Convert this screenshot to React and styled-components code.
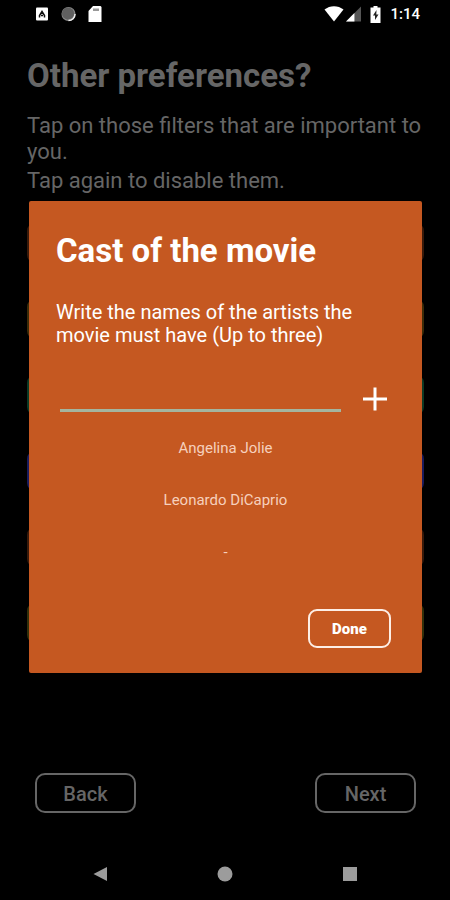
import { useState } from "react"
import styled, { createGlobalStyle } from "styled-components"

const GlobalStyle = createGlobalStyle`
  body {
    margin: 0;
    background-color: #000;
    font-family: Roboto, "Liberation Sans", sans-serif;
  }

  * {
    box-sizing: border-box;
  }
`

const Screen = styled.div`
  min-height: 100vh;
  display: flex;
  flex-direction: column;
  background-color: #000;
`

const StatusBar = styled.div`
  height: 24px;
  padding: 4px 30px 0 35px;
  display: flex;
  align-items: center;
  justify-content: space-between;
  color: white;
`

const StatusGroup = styled.div`
  display: flex;
  align-items: center;
  gap: ${(props) => props.$gap};
`

const Clock = styled.span`
  font-size: 15px;
  line-height: 20px;
  font-weight: 500;
`

const Content = styled.main`
  position: relative;
  flex: 1;
  display: flex;
  flex-direction: column;
  padding: 32px 26px 37px 27px;
`

const PageTitle = styled.h1`
  margin: 0 0 17px;
  font-size: 33px;
  line-height: 40px;
  font-weight: bold;
  color: #666;
`

const PageText = styled.p`
  margin: 0 0 3px;
  font-size: 22px;
  line-height: 26px;
  color: #666;
`

const Filters = styled.div`
  display: flex;
  flex-direction: column;
  gap: 34px;
  margin-top: 25px;
`

const Filter = styled.div`
  height: 42px;
  border: 2px solid ${(props) => props.$color};
  border-radius: 9px;
`

const Footer = styled.div`
  display: flex;
  justify-content: space-between;
  margin-top: auto;
  padding: 0 8px;
`

const FooterButton = styled.button`
  width: 101px;
  height: 40px;
  padding: 1px 0 0;
  border: 2px solid #666;
  border-radius: 10px;
  background: none;
  color: #666;
  font-family: inherit;
  font-size: 20px;
  font-weight: 500;
  cursor: pointer;
`

const Overlay = styled.div`
  position: absolute;
  inset: 0;
  display: flex;
  align-items: center;
  padding: 0 28px 0 29px;
`

const Dialog = styled.section`
  width: 100%;
  padding: 30px 31px 25px 27px;
  border-radius: 2px;
  background-color: #c55821;
  color: white;
`

const DialogTitle = styled.h2`
  margin: 0 0 30px;
  font-size: 33px;
  line-height: 40px;
  font-weight: bold;
`

const DialogText = styled.label`
  display: block;
  max-width: 310px;
  font-size: 20px;
  line-height: 23px;
`

const InputRow = styled.form`
  display: flex;
  align-items: flex-end;
  gap: 18px;
  margin: 25px 0 0 4px;
`

const NameInput = styled.input`
  flex: 1;
  min-width: 0;
  height: 40px;
  padding: 0 4px;
  border: none;
  border-bottom: 3px solid #a4b59f;
  border-radius: 0;
  outline: none;
  background: none;
  color: white;
  font-family: inherit;
  font-size: 20px;
`

const AddButton = styled.button`
  display: flex;
  padding: 0 4px 1px;
  border: none;
  background: none;
  color: white;
  cursor: pointer;
`

const ArtistList = styled.ul`
  display: flex;
  flex-direction: column;
  gap: 32px;
  margin: 26px 0 47px;
  padding: 0 0 0 4px;
  list-style: none;
`

const Artist = styled.li`
  font-size: 15px;
  line-height: 20px;
  text-align: center;
  color: #f6d0bd;
`

const DialogActions = styled.div`
  display: flex;
  justify-content: flex-end;
`

const DoneButton = styled.button`
  width: 83px;
  height: 39px;
  padding: 0;
  border: 2px solid #fdeee6;
  border-radius: 9px;
  background: none;
  color: white;
  font-family: inherit;
  font-size: 15px;
  font-weight: 900;
  cursor: pointer;
`

const NavBar = styled.nav`
  height: 50px;
  padding-bottom: 2px;
  display: flex;
  align-items: center;
  justify-content: center;
  gap: 101px;
`

const NavButton = styled.button`
  display: flex;
  padding: 4px;
  border: none;
  background: none;
  color: #9c9c9c;
  cursor: pointer;
`

const filterColors = ["#3a1a0a", "#3d2c08", "#0c3a24", "#1b1b5c", "#3a1a0a", "#33300a"]

const StatusIcons = () => (
  <StatusBar>
    <StatusGroup $gap="12px">
      <svg width="14" height="14" viewBox="0 0 14 14">
        <rect x="1" y="0.5" width="12" height="13" rx="1" fill="#fff" />
        <path d="M4.500 10.500V8.500L7 4.500L9.500 8.500V10.500M6 8.500H8" fill="none" stroke="#111" strokeWidth="1.500" />
      </svg>
      <svg width="15" height="16" viewBox="0 0 16 16">
        <circle cx="8" cy="8" r="7.500" fill="#8a8a8a" />
        <circle cx="7.500" cy="7.500" r="6.500" fill="#606060" />
        <path d="M15 8A7 7 0 0 1 8 15" fill="none" stroke="#f0f0f0" strokeWidth="1.500" />
      </svg>
      <svg width="14" height="16" viewBox="0 0 14 16">
        <path d="M5 0H12.500L13.500 1V16H0.500V5Z" fill="#fff" />
        <path d="M6 2.500V5M8 2.500V5M10 2.500V5" stroke="#555" strokeWidth="1.200" />
      </svg>
    </StatusGroup>
    <StatusGroup $gap="9px">
      <StatusGroup $gap="2px">
        <svg width="20" height="16" viewBox="0 0 20 16">
          <path d="M0.500 3.500C6 -1 14 -1 19.500 3.500L10 15.500Z" fill="#fff" />
        </svg>
        <svg width="15" height="16" viewBox="0 0 16 16">
          <path d="M0 16L16 0V16Z" fill="#555" />
          <path d="M0 16L9 7V16Z" fill="#fff" />
        </svg>
      </StatusGroup>
      <svg width="11" height="17" viewBox="0 0 11 17">
        <path d="M3.500 0H7.500V1.500H10.500V17H0.500V1.500H3.500Z" fill="#fff" />
        <path d="M6.500 4L3 9.500H5V14L8.500 8.500H6.300Z" fill="#222" />
      </svg>
      <Clock>1:14</Clock>
    </StatusGroup>
  </StatusBar>
)

const App = () => {
  const [name, setName] = useState("")
  const [artists, setArtists] = useState(["Angelina Jolie", "Leonardo DiCaprio"])
  const [open, setOpen] = useState(true)

  const handleAdd = (e) => {
    e.preventDefault()
    if (!name.trim() || artists.length >= 3) return
    setArtists([...artists, name.trim()])
    setName("")
  }

  return (
    <Screen>
      <GlobalStyle />
      <StatusIcons />
      <Content>
        <PageTitle>Other preferences?</PageTitle>
        <PageText>Tap on those filters that are important to you.</PageText>
        <PageText>Tap again to disable them.</PageText>
        <Filters>
          {filterColors.map((color, i) => (
            <Filter key={i} $color={color} />
          ))}
        </Filters>
        <Footer>
          <FooterButton type="button">Back</FooterButton>
          <FooterButton type="button">Next</FooterButton>
        </Footer>
        {open && (
          <Overlay>
            <Dialog role="dialog" aria-labelledby="cast-title">
              <DialogTitle id="cast-title">Cast of the movie</DialogTitle>
              <DialogText htmlFor="artist">
                Write the names of the artists the movie must have (Up to three)
              </DialogText>
              <InputRow onSubmit={handleAdd}>
                <NameInput id="artist" value={name} onChange={(e) => setName(e.target.value)} />
                <AddButton type="submit" aria-label="Add">
                  <svg width="24" height="24" viewBox="0 0 24 24">
                    <path d="M12 0.500V23.500M0 12H24" stroke="currentColor" strokeWidth="3" />
                  </svg>
                </AddButton>
              </InputRow>
              <ArtistList>
                {[0, 1, 2].map((i) => (
                  <Artist key={i}>{artists[i] || "-"}</Artist>
                ))}
              </ArtistList>
              <DialogActions>
                <DoneButton type="button" onClick={() => setOpen(false)}>
                  Done
                </DoneButton>
              </DialogActions>
            </Dialog>
          </Overlay>
        )}
      </Content>
      <NavBar>
        <NavButton type="button" aria-label="Back">
          <svg width="16" height="16" viewBox="0 0 16 16">
            <path d="M1.500 8L15 1V15Z" fill="currentColor" />
          </svg>
        </NavButton>
        <NavButton type="button" aria-label="Home">
          <svg width="16" height="16" viewBox="0 0 16 16">
            <circle cx="8" cy="8" r="7.500" fill="currentColor" />
          </svg>
        </NavButton>
        <NavButton type="button" aria-label="Recent apps">
          <svg width="16" height="16" viewBox="0 0 16 16">
            <rect x="1" y="1" width="14" height="14" fill="currentColor" />
          </svg>
        </NavButton>
      </NavBar>
    </Screen>
  )
}

export default App
